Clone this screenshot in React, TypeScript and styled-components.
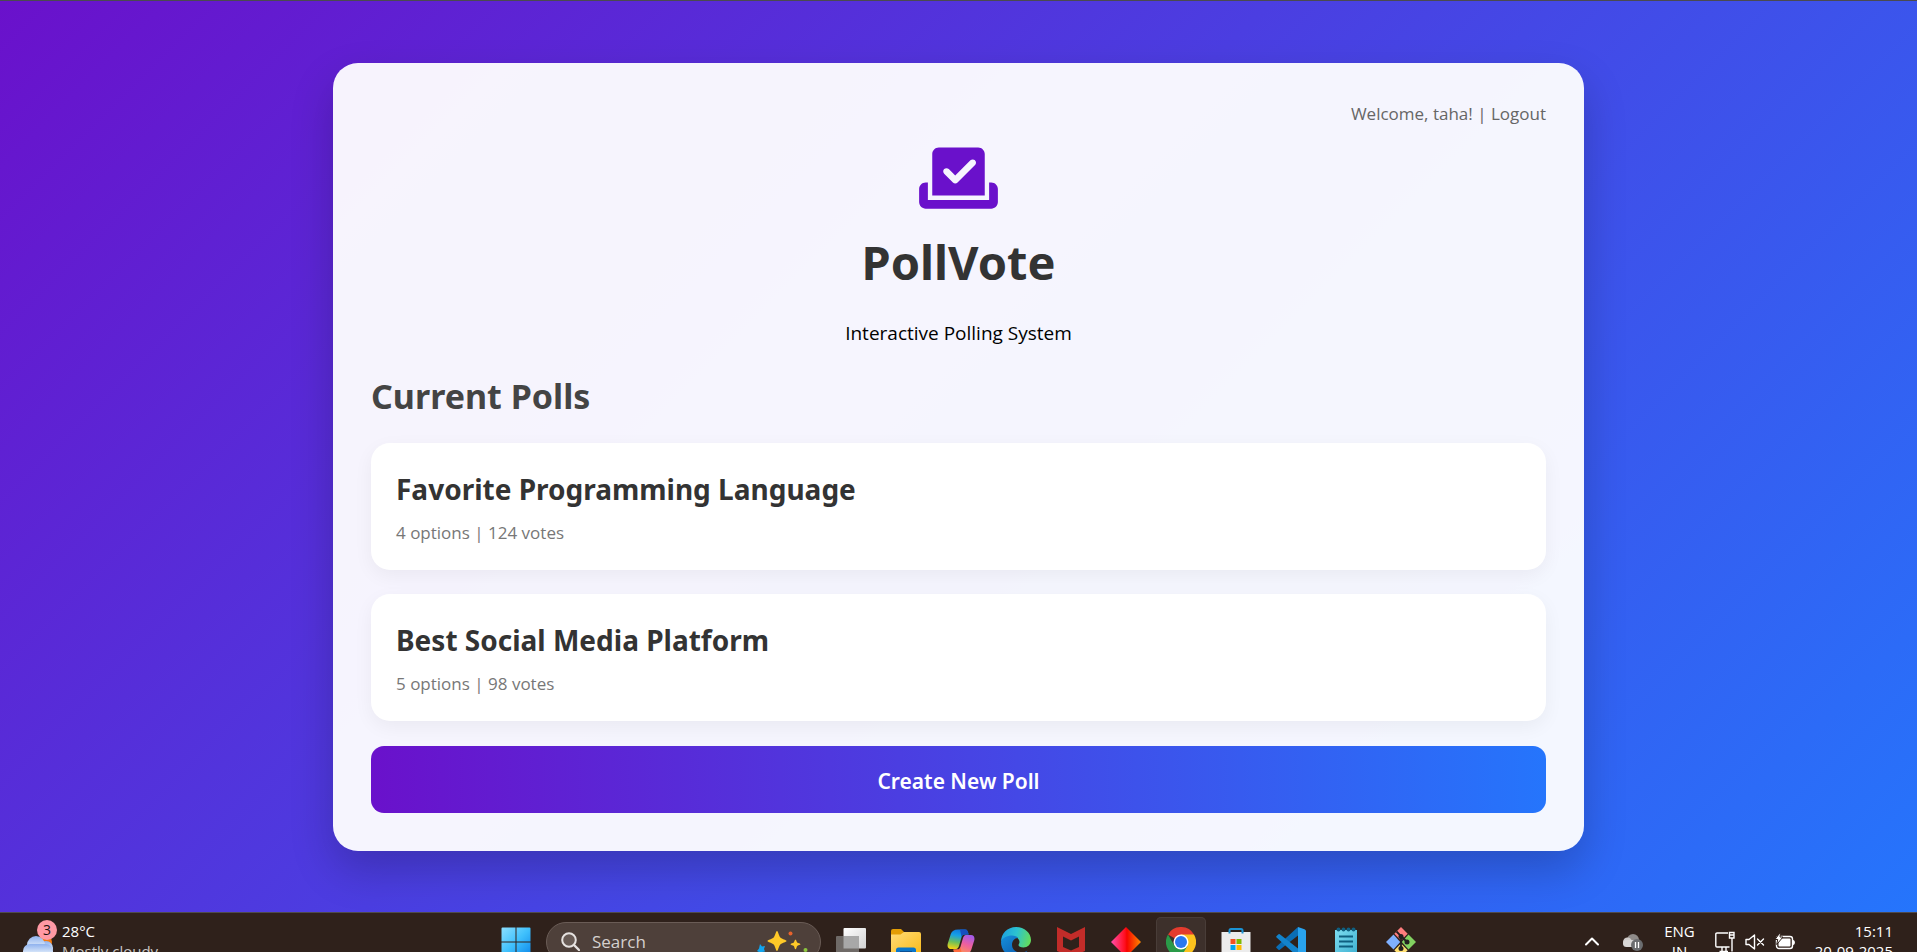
import React from 'react';
import styled, { createGlobalStyle } from 'styled-components';

const headingFont = '"Segoe UI", "Noto Sans", sans-serif';
const bodyFont = '"Segoe UI", "Open Sans", sans-serif';

const GlobalStyle = createGlobalStyle`
  *, *::before, *::after { box-sizing: border-box; }
  body { margin: 0; font-family: ${bodyFont}; color: #000; }
  h1, h2, h3, p { margin: 0; }
  h1, h2, h3 { font-family: ${headingFont}; font-weight: 700; }
  button { font: inherit; border: 0; padding: 0; background: none; color: inherit; cursor: pointer; }
`;

const Screen = styled.div`
  display: flex;
  flex-direction: column;
  height: 100vh;
  overflow: hidden;
`;

const Page = styled.main`
  flex: 1;
  min-height: 0;
  display: flex;
  align-items: center;
  justify-content: center;
  border-top: 1px solid #4a4a50;
  background: linear-gradient(135deg, #6a11cb 0%, #2575fc 100%);
`;

const Panel = styled.section`
  width: 100%;
  max-width: 1251px;
  padding: 38px;
  border-radius: 25px;
  background: rgba(255, 255, 255, 0.95);
  box-shadow: 0 19px 44px rgba(0, 0, 0, 0.2);
`;

const Account = styled.p`
  text-align: right;
  font-size: 17px;
  line-height: 25px;
  color: #666;
`;

const AccountLink = styled.a`
  color: inherit;
  text-decoration: none;
`;

const Brand = styled.header`
  display: flex;
  flex-direction: column;
  align-items: center;
  margin-top: 17px;
  text-align: center;
`;

const BrandMark = styled.svg`
  width: 79px;
  height: 70px;
  fill: #6a11cb;
`;

const BrandName = styled.h1`
  margin-top: 19px;
  font-size: 47px;
  line-height: 60px;
  color: #333;
`;

const Tagline = styled.p`
  margin-top: 27px;
  font-size: 19px;
  line-height: 28px;
`;

const SectionTitle = styled.h2`
  margin: 26px 0 24px;
  font-size: 34px;
  line-height: 46px;
  color: #444;
`;

const PollList = styled.div`
  display: grid;
  gap: 24px;
`;

const PollCard = styled.article`
  padding: 25px;
  border-radius: 19px;
  background: #fff;
  box-shadow: 0 6px 19px rgba(0, 0, 0, 0.05);
`;

const PollTitle = styled.h3`
  font-size: 28px;
  line-height: 42px;
  color: #333;
`;

const PollMeta = styled.p`
  margin-top: 10px;
  font-size: 17px;
  line-height: 25px;
  color: #777;
`;

const CreateButton = styled.button`
  && {
    display: block;
    width: 100%;
    padding: 21px 0 18px;
    margin-top: 25px;
    border-radius: 13px;
    background: linear-gradient(to right, #6a11cb, #2575fc);
    color: #fff;
    font: 600 21px/28px ${headingFont};
  }
`;

const Taskbar = styled.footer`
  flex: 0 0 40px;
  overflow: hidden;
  background: #2f211b;
  color: #fff;
  font-size: 15px;
  line-height: 20px;
`;

const TaskbarRow = styled.div`
  display: grid;
  grid-template-columns: 1fr auto 1fr;
  align-items: center;
  height: 58px;
  border-top: 1px solid #4f4a4c;
`;

const TwoLines = styled.span`
  display: block;
  padding-bottom: 2px;
`;

const Weather = styled.button`
  && {
    display: flex;
    align-items: center;
    gap: 4px;
    padding-left: 22px;
    justify-self: start;
    text-align: left;
  }
`;

const WeatherNote = styled.span`
  color: #c9c5c3;
`;

const Apps = styled.nav`
  display: flex;
  align-items: center;
  gap: 5px;
`;

const AppTile = styled.button<{ $active?: boolean }>`
  && {
    display: grid;
    place-items: center;
    width: 50px;
    height: 50px;
    border-radius: 5px;
    background: ${(p) => (p.$active ? '#3d302b' : 'transparent')};
    box-shadow: ${(p) => (p.$active ? 'inset 0 0 0 1px #493d38' : 'none')};
  }
`;

const SearchBox = styled.label`
  display: flex;
  align-items: center;
  gap: 12px;
  width: 275px;
  height: 40px;
  padding: 0 11px 0 14px;
  border: 1px solid #6a5c56;
  border-radius: 20px;
  background: #4e403a;
`;

const SearchInput = styled.input`
  flex: 1;
  min-width: 0;
  padding: 0;
  border: 0;
  outline: 0;
  background: transparent;
  font: 17px/24px ${bodyFont};
  color: #fff;
  &::placeholder { color: #d5d0ce; opacity: 1; }
`;

const Tray = styled.div`
  display: flex;
  align-items: center;
  justify-content: flex-end;
  gap: 20px;
  padding-right: 24px;
`;

const TrayButton = styled.button<{ $align?: string }>`
  && {
    display: flex;
    align-items: center;
    gap: 10px;
    text-align: ${(p) => p.$align || 'center'};
  }
`;

const Icon = styled.svg<{ $w?: number; $h?: number }>`
  display: block;
  flex: none;
  width: ${(p) => p.$w || 30}px;
  height: ${(p) => p.$h || 30}px;
`;

const polls = [
  { title: 'Favorite Programming Language', options: 4, votes: 124 },
  { title: 'Best Social Media Platform', options: 5, votes: 98 },
];

const WeatherIcon = () => (
  <Icon $w={36} $h={44} viewBox="0 0 36 44">
    <defs>
      <linearGradient id="cloud" x1="0" y1="0" x2="0" y2="1">
        <stop offset="0" stopColor="#8fb2ee" />
        <stop offset="0.5" stopColor="#cfe0f8" />
        <stop offset="1" stopColor="#e8f1fd" />
      </linearGradient>
    </defs>
    <circle cx="23" cy="22" r="7" fill="#f47b12" />
    <circle cx="24" cy="28" r="7" fill="url(#cloud)" />
    <circle cx="14" cy="25" r="9" fill="url(#cloud)" />
    <rect x="1" y="24" width="30" height="15" rx="7" fill="url(#cloud)" />
    <circle cx="25" cy="10" r="10" fill="#ff99a4" />
    <text x="25" y="15" textAnchor="middle" fontSize="14" fill="#1c1210">3</text>
  </Icon>
);

const WindowsIcon = () => (
  <Icon viewBox="0 0 30 30">
    <defs>
      <linearGradient id="win" gradientUnits="userSpaceOnUse" x1="0" y1="0" x2="30" y2="30">
        <stop offset="0" stopColor="#8fe0ff" />
        <stop offset="0.5" stopColor="#3fc0fc" />
        <stop offset="1" stopColor="#0a84e8" />
      </linearGradient>
    </defs>
    <path fill="url(#win)" d="M1.5.5H14.500v14H.5v-13a1 1 0 0 1 1-1zM15.500.5h13a1 1 0 0 1 1 1v13h-14zM.5 15.500h14v14h-13a1 1 0 0 1-1-1zM15.500 15.500h14v13a1 1 0 0 1-1 1h-13z" />
  </Icon>
);

const MagnifierIcon = () => (
  <Icon $w={19} $h={19} viewBox="0 0 19 19" fill="none" stroke="#e6e2e0" strokeWidth="2" strokeLinecap="round">
    <circle cx="8" cy="8" r="6.800" fill="#685b55" />
    <path d="M13 13l5 5" strokeWidth="2.400" />
  </Icon>
);

const SparkleIcon = () => (
  <Icon $w={52} $h={32} viewBox="0 0 52 32">
    <path fill="#ffc928" d="M20 5c1.200 0 1.800 5 3.300 6.500S29.500 14 29.500 15s-4.700 2-6.200 3.500S21.200 25 20 25s-1.800-5-3.300-6.500S10.500 16 10.500 15s4.700-2 6.200-3.500S18.800 5 20 5z" />
    <path fill="#ffc928" d="M38.500 13.500c.8 0 1 2.400 1.700 3s3.300 1 3.300 1.700-2.700 1-3.300 1.700-.9 3.400-1.700 3.400-1.100-2.800-1.700-3.400-3.300-1-3.300-1.700 2.700-1.100 3.300-1.700.9-3 1.700-3z" />
    <path fill="#12a5ee" d="M3 18l2 2.500 3-.5-1 3 1 2.500-3 .5-1.500 3-1.500-3-2-1 2-2.500z" />
    <circle cx="33.500" cy="7.500" r="2" fill="#e8622c" />
    <circle cx="48.500" cy="24" r="2" fill="#8cc63f" />
  </Icon>
);

const TaskViewIcon = () => (
  <Icon viewBox="0 0 30 30">
    <defs>
      <linearGradient id="view" x1="0" y1="0" x2="1" y2="1">
        <stop offset="0" stopColor="#fff" />
        <stop offset="1" stopColor="#d2d2d2" />
      </linearGradient>
    </defs>
    <rect x="7.500" y="1" width="22.500" height="20.500" rx="1" fill="url(#view)" />
    <rect x="0" y="9" width="23" height="20" rx="1" fill="#6f6a67" />
    <path d="M7.500 9H23v12.500H7.500z" fill="#a8a8a8" />
  </Icon>
);

const FolderIcon = () => (
  <Icon viewBox="0 0 30 30">
    <defs>
      <linearGradient id="folder" x1="0" y1="0" x2="1" y2="1">
        <stop offset="0" stopColor="#ffdc78" />
        <stop offset="1" stopColor="#fbb917" />
      </linearGradient>
    </defs>
    <path d="M0 4a2 2 0 0 1 2-2h8l3 3v6H0z" fill="#e39d05" />
    <path d="M0 7.500h9.500l3.500-2.500h15a2 2 0 0 1 2 2V26a2 2 0 0 1-2 2H2a2 2 0 0 1-2-2z" fill="url(#folder)" />
    <path d="M5 28v-5a2.500 2.500 0 0 1 2.500-2.500h15A2.500 2.500 0 0 1 25 23v5z" fill="#0b76c9" />
    <path d="M9 24h12v1.500H9z" fill="#0b4f93" />
  </Icon>
);

const CopilotIcon = () => (
  <Icon viewBox="0 0 30 30">
    <defs>
      <linearGradient id="copA" x1="0.500" y1="0" x2="0.300" y2="1">
        <stop offset="0" stopColor="#0f7be0" />
        <stop offset="0.300" stopColor="#16a0e6" />
        <stop offset="0.650" stopColor="#6cbf5a" />
        <stop offset="1" stopColor="#f5d313" />
      </linearGradient>
      <linearGradient id="copB" x1="0.700" y1="0" x2="0.300" y2="1">
        <stop offset="0" stopColor="#a45be8" />
        <stop offset="0.450" stopColor="#ee5f9f" />
        <stop offset="1" stopColor="#ff9a4a" />
      </linearGradient>
    </defs>
    <path d="M12 2.500h7c2.500 0 3 2 3.600 5h-4.200c-1.600 0-2.300 1-2.800 2.600l-2.600 8.900c-.8 2.700-2 3-4 3H5c-3 0-4-2.600-3.200-5.500l3-9.500C6 4 8 2.500 12 2.500z" fill="url(#copA)" />
    <path d="M14 2.500h5c2.500 0 3 2 3.600 5h-4.200c-1.600 0-2.300 1-2.800 2.600z" fill="#164fbf" />
    <path d="M18 27.500h-7c-2.500 0-3-2-3.600-5h4.200c1.600 0 2.300-1 2.800-2.600l2.600-8.900c.8-2.700 2-3 4-3h4c3 0 4 2.600 3.200 5.500l-3 9.500C24 26 22 27.500 18 27.500z" fill="url(#copB)" />
    <path d="M16 27.500h-5c-2.500 0-3-2-3.600-5h4.200c1.600 0 2.300-1 2.800-2.600z" fill="#ff6a3d" />
  </Icon>
);

const EdgeIcon = () => (
  <Icon viewBox="0 0 30 30">
    <defs>
      <linearGradient id="edgeA" x1="0" y1="0.300" x2="1" y2="0.500">
        <stop offset="0" stopColor="#1c9fe0" />
        <stop offset="0.500" stopColor="#2cc3d0" />
        <stop offset="1" stopColor="#63dc5c" />
      </linearGradient>
      <linearGradient id="edgeB" x1="0" y1="0" x2="1" y2="1">
        <stop offset="0" stopColor="#1590dc" />
        <stop offset="1" stopColor="#0c52a5" />
      </linearGradient>
    </defs>
    <path d="M0 15C0 6.500 6.500 0 15 0s15 6 15 13c0 4.500-3.500 7.500-7.500 7.500-3 0-5-1-5-2.500 0-.8 1-1.300 1-3 0-3-3-5.500-7-5.500C6 9.500 1 12 0 15z" fill="url(#edgeA)" />
    <path d="M0 15c1-4 6-6.500 11-6.500 3 0 5 1 6.200 2.600-3.700 0-6.200 3-6.200 6.900 0 5 5 8.500 10.500 7.500 2-.3 3.600-1 5-2C24 27.500 20 30 15 30 6.500 30 0 23.500 0 15z" fill="url(#edgeB)" />
  </Icon>
);

const ShieldIcon = () => (
  <Icon viewBox="0 0 30 30">
    <path d="M1 0l14 7L29 0v24l-14 6-14-6z" fill="#c22c29" />
    <path d="M7 9.500l8 4 8-4V20l-8 3.500L7 20z" fill="#2f211b" />
  </Icon>
);

const DiamondIcon = () => (
  <Icon viewBox="0 0 30 30">
    <defs>
      <linearGradient id="diamond" x1="0" y1="0" x2="1" y2="0">
        <stop offset="0" stopColor="#ff4fae" />
        <stop offset="0.470" stopColor="#ff0d1c" />
        <stop offset="0.530" stopColor="#f40400" />
        <stop offset="1" stopColor="#ff8a00" />
      </linearGradient>
    </defs>
    <path d="M15 0l15 15-15 15L0 15z" fill="url(#diamond)" />
  </Icon>
);

const ChromeIcon = () => (
  <Icon viewBox="0 0 30 30">
    <path d="M15 15L2 7.500A15 15 0 0 1 28 7.500z" fill="#e33b2e" />
    <path d="M15 15V7.500h13A15 15 0 0 1 15 30z" fill="#fcc31e" />
    <path d="M2 7.500A15 15 0 0 0 15 30l6.500-11.200L15 15 8.500 18.700z" fill="#2a9a48" />
    <circle cx="15" cy="15" r="7.500" fill="#fff" />
    <circle cx="15" cy="15" r="6" fill="#2a78ee" />
  </Icon>
);

const StoreIcon = () => (
  <Icon viewBox="0 0 30 30">
    <path d="M8.500 6V3.500a1.500 1.500 0 0 1 1.500-1.500h10a1.500 1.500 0 0 1 1.500 1.500V6" fill="none" stroke="#1b93d4" strokeWidth="2" />
    <path d="M.5 5h29v21a3 3 0 0 1-3 3h-23a3 3 0 0 1-3-3z" fill="#ececec" />
    <path d="M8.500 5v1.500M21.500 5v1.500" stroke="#1b93d4" strokeWidth="2" />
    <path d="M9.500 12h5v5h-5z" fill="#f25022" />
    <path d="M15.500 12h5v5h-5z" fill="#7fba00" />
    <path d="M9.500 18h5v5h-5z" fill="#00a4ef" />
    <path d="M15.500 18h5v5h-5z" fill="#ffb900" />
  </Icon>
);

const CodeIcon = () => (
  <Icon viewBox="0 0 30 30">
    <path d="M22 0L.6 19.500a1 1 0 0 0 0 1.500l1.900 1.700a1 1 0 0 0 1.300 0L22 8.500z" fill="#0a6db5" />
    <path d="M22 30L.6 10.500a1 1 0 0 1 0-1.500l1.900-1.700a1 1 0 0 1 1.300 0L22 21.500z" fill="#1383cb" />
    <path d="M22 0l6.500 2.200A2 2 0 0 1 30 4v22a2 2 0 0 1-1.500 1.800L22 30z" fill="#29a3ee" />
  </Icon>
);

const NotepadIcon = () => (
  <Icon viewBox="0 0 30 30">
    <defs>
      <linearGradient id="note" x1="0" y1="0" x2="1" y2="1">
        <stop offset="0" stopColor="#7ddcf0" />
        <stop offset="1" stopColor="#3cafd0" />
      </linearGradient>
    </defs>
    <path d="M4 3h22v24a2 2 0 0 1-2 2H6a2 2 0 0 1-2-2z" fill="url(#note)" />
    <g fill="#0f5f80">
      <circle cx="7.500" cy="2.500" r="2" />
      <circle cx="12.500" cy="2.500" r="2" />
      <circle cx="17.500" cy="2.500" r="2" />
      <circle cx="22.500" cy="2.500" r="2" />
    </g>
    <path d="M8 9.500h14M8 14.500h14M8 19.500h14" stroke="#0f5f80" strokeWidth="1.800" />
  </Icon>
);

const GitIcon = () => (
  <Icon viewBox="0 0 30 30">
    <path d="M15 0l6.700 6.700L15 13.500 8.300 6.700z" fill="#ff7d7d" />
    <path d="M7.500 7.500l6.700 7.500-6.700 7.500L0 15z" fill="#7fb0ff" />
    <path d="M22.500 7.500L30 15l-7.500 7.500-6.700-7.500z" fill="#82d160" />
    <path d="M15 16.500l6.700 6.700L15 30l-6.700-6.800z" fill="#ffdf70" />
    <path d="M10.500 4.500l4.500 4.500v13M15 9l6 6" fill="none" stroke="#231f20" strokeWidth="1.800" />
    <g fill="#231f20">
      <circle cx="15" cy="9.500" r="2.500" />
      <circle cx="21" cy="15" r="2.500" />
      <circle cx="15" cy="21.500" r="2.500" />
    </g>
  </Icon>
);

const ChevronIcon = () => (
  <Icon $w={20} $h={15} viewBox="0 0 20 15" fill="none" stroke="#fff" strokeWidth="2" strokeLinecap="round" strokeLinejoin="round">
    <path d="M4 10.500l6-6 6 6" />
  </Icon>
);

const CloudSyncIcon = () => (
  <Icon $w={22} $h={20} viewBox="0 0 22 20">
    <circle cx="11" cy="8" r="6" fill="#8f8b89" />
    <circle cx="5.500" cy="10" r="4.500" fill="#cfcccb" />
    <rect x="1" y="8" width="18" height="7" rx="3.500" fill="#d9d7d6" />
    <circle cx="15" cy="13" r="6" fill="#6b6d70" />
    <path d="M13.500 10v6M16.500 10v6" stroke="#fff" strokeWidth="1.300" />
  </Icon>
);

const NetworkIcon = () => (
  <Icon $w={20} $h={22} viewBox="0 0 20 22" fill="none" stroke="#fff" strokeWidth="1.400">
    <path d="M13 2H2a1.200 1.200 0 0 0-1.200 1.200v11.600A1.200 1.200 0 0 0 2 16h12.500M4.500 20.500H13M7 16v4M11 16v4" />
    <path d="M14.500 1.500h4.500v5.500h-4.500zM14.500 4h4.500M17 7v13.500" />
  </Icon>
);

const MutedIcon = () => (
  <Icon $w={20} $h={20} viewBox="0 0 20 20" fill="none" stroke="#fff" strokeWidth="1.400" strokeLinejoin="round" strokeLinecap="round">
    <path d="M1 7.500h3L9.500 3v14L4 12.500H1z" />
    <path d="M12.500 7l6 6M18.500 7l-6 6" />
  </Icon>
);

const BatteryIcon = () => (
  <Icon $w={20} $h={20} viewBox="0 0 20 20">
    <rect x="1.500" y="4.500" width="16" height="12" rx="2.500" fill="none" stroke="#fff" strokeWidth="1.400" />
    <rect x="3.500" y="6.500" width="12" height="8" rx="1" fill="#fff" />
    <path d="M18 8c2.500 0 2.500 5 0 5z" fill="#fff" />
    <path d="M5.500 0L0 7.500h2.700L1.700 12.500 8 5H5z" fill="#fff" stroke="#2f211b" strokeWidth="1" />
  </Icon>
);

const apps = [
  { name: 'Task View', icon: TaskViewIcon },
  { name: 'File Explorer', icon: FolderIcon },
  { name: 'Copilot', icon: CopilotIcon },
  { name: 'Edge', icon: EdgeIcon },
  { name: 'McAfee', icon: ShieldIcon },
  { name: 'Diamond', icon: DiamondIcon },
  { name: 'Chrome', icon: ChromeIcon, active: true },
  { name: 'Store', icon: StoreIcon },
  { name: 'Visual Studio Code', icon: CodeIcon },
  { name: 'Notepad', icon: NotepadIcon },
  { name: 'Git', icon: GitIcon },
];

export default function App() {
  return (
    <Screen>
      <GlobalStyle />
      <Page>
        <Panel>
          <Account>
            Welcome, taha! | <AccountLink href="#logout">Logout</AccountLink>
          </Account>
          <Brand>
            <BrandMark viewBox="0 0 576 512" aria-hidden="true">
              <path d="M96 80c0-26.500 21.500-48 48-48H432c26.500 0 48 21.500 48 48V384H96V80zm313 47c-9.400-9.400-24.600-9.400-33.900 0l-111 111-47-47c-9.400-9.400-24.600-9.400-33.900 0s-9.400 24.600 0 33.900l64 64c9.400 9.400 24.600 9.400 33.900 0L409 161c9.400-9.400 9.400-24.600 0-33.900zM0 336c0-26.500 21.500-48 48-48H64V416H512V288h16c26.500 0 48 21.500 48 48v96c0 26.500-21.500 48-48 48H48c-26.500 0-48-21.500-48-48V336z" />
            </BrandMark>
            <BrandName>PollVote</BrandName>
            <Tagline>Interactive Polling System</Tagline>
          </Brand>
          <SectionTitle>Current Polls</SectionTitle>
          <PollList>
            {polls.map((poll) => (
              <PollCard key={poll.title}>
                <PollTitle>{poll.title}</PollTitle>
                <PollMeta>{`${poll.options} options | ${poll.votes} votes`}</PollMeta>
              </PollCard>
            ))}
          </PollList>
          <CreateButton type="button">Create New Poll</CreateButton>
        </Panel>
      </Page>
      <Taskbar>
        <TaskbarRow>
          <Weather type="button">
            <WeatherIcon />
            <TwoLines>
              28°C
              <br />
              <WeatherNote>Mostly cloudy</WeatherNote>
            </TwoLines>
          </Weather>
          <Apps aria-label="Applications">
            <AppTile type="button" aria-label="Start">
              <WindowsIcon />
            </AppTile>
            <SearchBox>
              <MagnifierIcon />
              <SearchInput type="text" placeholder="Search" aria-label="Search" />
              <SparkleIcon />
            </SearchBox>
            {apps.map(({ name, icon: Glyph, active }) => (
              <AppTile key={name} type="button" aria-label={name} $active={active}>
                <Glyph />
              </AppTile>
            ))}
          </Apps>
          <Tray>
            <TrayButton type="button" aria-label="Hidden icons">
              <ChevronIcon />
            </TrayButton>
            <TrayButton type="button" aria-label="Cloud sync">
              <CloudSyncIcon />
            </TrayButton>
            <TrayButton type="button">
              <TwoLines>
                ENG
                <br />
                IN
              </TwoLines>
            </TrayButton>
            <TrayButton type="button" aria-label="Network, sound and battery">
              <NetworkIcon />
              <MutedIcon />
              <BatteryIcon />
            </TrayButton>
            <TrayButton type="button" $align="right">
              <TwoLines>
                15:11
                <br />
                20-09-2025
              </TwoLines>
            </TrayButton>
          </Tray>
        </TaskbarRow>
      </Taskbar>
    </Screen>
  );
}
